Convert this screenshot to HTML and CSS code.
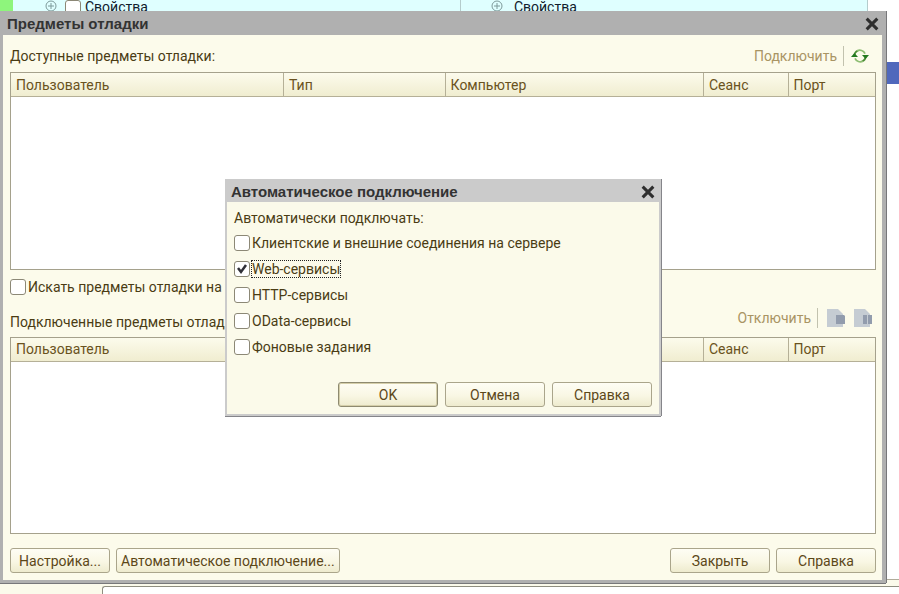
FILE: index.html
```html
<!DOCTYPE html>
<html lang="ru">
<head>
<meta charset="utf-8">
<title>Предметы отладки</title>
<link rel="stylesheet" href="styles.css">
</head>
<body>
<div class="workspace">
  <div class="tree-row">
    <div class="tree-cell tree-cell-main">
      <span class="marker"></span>
      <svg class="expand" viewBox="0 0 12 12"><circle cx="6" cy="6" r="5"/><path d="M3 6h6M6 3v6"/></svg>
      <input type="checkbox" class="check tree-check" aria-label="Свойства">
      <span>Свойства</span>
    </div>
    <div class="tree-cell tree-cell-second">
      <svg class="expand" viewBox="0 0 12 12"><circle cx="6" cy="6" r="5"/><path d="M3 6h6M6 3v6"/></svg>
      <span>Свойства</span>
    </div>
  </div>
  <div class="selection"></div>
  <div class="editor-foot"><div class="editor-field"></div></div>
</div>

<main class="window">
  <header class="titlebar">
    <h1>Предметы отладки</h1>
    <button class="close" aria-label="Закрыть окно"><svg viewBox="0 0 12 12"><path d="M2 2l8 8M10 2l-8 8"/></svg></button>
  </header>
  <div class="window-body">
    <div class="section-head">
      <h2>Доступные предметы отладки:</h2>
      <div class="tools tools-inset">
        <button class="link-button" disabled>Подключить</button>
        <span class="divider"></span>
        <button class="icon-button" aria-label="Обновить">
          <svg class="refresh" viewBox="0 0 18 16"><path class="arc" d="M3.4 8A5.6 5.6 0 0 1 7 2.6M14.6 8A5.6 5.6 0 0 1 11 13.4"/><path class="arc light" d="M6 3A5.6 5.6 0 0 1 14 5.6M12 13A5.6 5.6 0 0 1 4 10.4"/><path class="head" d="M0 9L3.4 5l3.6 4zM11 7h7L14.6 11z"/></svg>
        </button>
      </div>
    </div>
    <div class="grid">
      <table>
        <colgroup><col class="c-user"><col class="c-type"><col class="c-computer"><col class="c-session"><col class="c-port"></colgroup>
        <thead><tr><th>Пользователь</th><th>Тип</th><th>Компьютер</th><th>Сеанс</th><th>Порт</th></tr></thead>
      </table>
    </div>
    <label class="option search-option"><input type="checkbox" class="check"><span>Искать предметы отладки на у</span></label>
    <div class="section-head section-head-second">
      <h2>Подключенные предметы отладки:</h2>
      <div class="tools">
        <button class="link-button" disabled>Отключить</button>
        <span class="divider"></span>
        <button class="icon-button" disabled aria-label="Остановить">
          <svg class="doc" viewBox="0 0 18 18"><path class="page" d="M0 0h11l5 5v13H0z"/><path class="sign" d="M9 6h8l1 1v8H9z"/></svg>
        </button>
        <button class="icon-button" disabled aria-label="Приостановить">
          <svg class="doc" viewBox="0 0 18 18"><path class="page" d="M0 0h11l5 5v13H0z"/><path class="sign" d="M9 6h4v9H9zM14 6h4v9h-4z"/></svg>
        </button>
      </div>
    </div>
    <div class="grid">
      <table>
        <colgroup><col class="c-user"><col class="c-type"><col class="c-computer"><col class="c-session"><col class="c-port"></colgroup>
        <thead><tr><th>Пользователь</th><th>Тип</th><th>Компьютер</th><th>Сеанс</th><th>Порт</th></tr></thead>
      </table>
    </div>
    <footer class="actions">
      <button class="button">Настройка...</button>
      <button class="button">Автоматическое подключение...</button>
      <span class="spacer"></span>
      <button class="button">Закрыть</button>
      <button class="button">Справка</button>
    </footer>
  </div>

  <div class="dialog-layer">
    <section class="dialog" role="dialog" aria-labelledby="dialog-title">
      <header class="titlebar titlebar-light">
        <h1 id="dialog-title">Автоматическое подключение</h1>
        <button class="close" aria-label="Закрыть диалог"><svg viewBox="0 0 12 12"><path d="M2 2l8 8M10 2l-8 8"/></svg></button>
      </header>
      <fieldset class="options">
        <legend>Автоматически подключать:</legend>
        <label class="option"><input type="checkbox" class="check"><span>Клиентские и внешние соединения на сервере</span></label>
        <label class="option focused"><input type="checkbox" class="check" checked><span>Web-сервисы</span></label>
        <label class="option"><input type="checkbox" class="check"><span>HTTP-сервисы</span></label>
        <label class="option"><input type="checkbox" class="check"><span>OData-сервисы</span></label>
        <label class="option"><input type="checkbox" class="check"><span>Фоновые задания</span></label>
      </fieldset>
      <div class="dialog-actions">
        <button class="button button-default">OK</button>
        <button class="button">Отмена</button>
        <button class="button">Справка</button>
      </div>
    </section>
  </div>
</main>
</body>
</html>
```
FILE: styles.css
```css
* { box-sizing: border-box; }

body {
  margin: 0;
  height: 100vh;
  overflow: hidden;
  position: relative;
  background: #fff;
  color: #4a3c14;
  font: 14px/16px Roboto, "Liberation Sans", sans-serif;
}

button, input { font: inherit; color: inherit; }
h1, h2 { margin: 0; font-size: 14px; }
h2 { font-weight: 400; }

/* Workspace behind the windows */
.workspace {
  height: 100%;
  display: flex;
  flex-direction: column;
}
.tree-row {
  display: flex;
  height: 62px;
  margin-right: 31px;
  color: #10202c;
  line-height: 14px;
}
.tree-cell {
  display: flex;
  align-items: flex-start;
  height: 40px;
  background: #dfffff;
  border-right: 1px solid #b4cccc;
}
.tree-cell-main { width: 53.1%; }
.tree-cell-second { flex: 1; padding-left: 30px; gap: 11px; }
.marker { width: 13px; height: 11px; background: #8ef57c; margin-right: 32px; }
.expand {
  width: 12px;
  height: 12px;
  fill: none;
  stroke: #7d9a9a;
}
.tree-cell-main .expand { margin-right: 8px; }
.selection {
  align-self: flex-end;
  width: 12px;
  height: 22px;
  background: #5068bc;
}
.editor-foot {
  margin-top: auto;
  height: 15px;
  padding: 6px 0 0 102px;
  border-top: 1px solid #b0ac9a;
  background: #fbfaeb;
}
.editor-field {
  height: 100%;
  background: #fff;
  border: solid #8f8e80;
  border-width: 1px 0 0 1px;
  border-top-left-radius: 3px;
}

/* Windows */
.window {
  position: absolute;
  inset: 11px 13px 11px 0;
  display: flex;
  flex-direction: column;
  background: #fcfbeb;
  border: solid #b0b0b0;
  border-width: 0 3px 3px;
  box-shadow: inset -1px 0 #b0b0b0, 1px 0 #77777a, 0 1px #77777a;
}
.titlebar {
  display: flex;
  align-items: center;
  justify-content: space-between;
  height: 24px;
  flex: none;
  padding: 2px 2px 0 4px;
  background: #b0b0b0;
  color: #333;
}
.titlebar-light { height: 23px; background: #cbcbcb; }
.titlebar h1 { font: 700 15px/16px "Liberation Sans", sans-serif; }
.close {
  width: 18px;
  height: 18px;
  padding: 1px;
  border: 0;
  background: none;
}
.close svg { display: block; width: 16px; height: 16px; }
.close path { fill: none; stroke: #2e2e2e; stroke-width: 2.3; }

.window-body {
  flex: 1;
  display: flex;
  flex-direction: column;
  padding: 0 7px 7px;
}
.section-head {
  display: flex;
  align-items: center;
  justify-content: space-between;
  height: 37px;
  padding-top: 4px;
}
.section-head-second { padding-top: 8px; }
.section-head-second .tools { align-self: flex-start; }
.tools { display: flex; align-items: center; gap: 6px; padding-right: 4px; }
.tools-inset { padding-right: 7px; }
.tools-inset .icon-button { margin-left: 1px; }
.divider { width: 1px; height: 20px; background: #c2c2ae; }
.link-button {
  border: 0;
  padding: 0;
  background: none;
  color: #a99463;
}
.icon-button {
  display: flex;
  padding: 0;
  border: 0;
  background: none;
  margin-left: 3px;
}
.refresh { width: 18px; height: 16px; }
.refresh .arc { fill: none; stroke: #4a8b35; stroke-width: 1.8; }
.refresh .light { stroke: #8dbd72; }
.refresh .head { fill: #247a20; }
.doc { width: 18px; height: 18px; }
.doc .page { fill: #c5ccd3; }
.doc .sign { fill: #929cad; }

.grid {
  flex: 1;
  background: #fff;
  border: 1px solid #a5a18c;
}
.grid table {
  width: 100%;
  table-layout: fixed;
  border-collapse: separate;
  border-spacing: 0;
}
.grid th {
  height: 24px;
  padding: 0 5px;
  text-align: left;
  font-weight: 400;
  color: #6a5220;
  background: linear-gradient(#fcfbec, #f0edd0);
  border-right: 1px solid #b5b097;
  border-bottom: 1px solid #b5b097;
}
.grid th:last-child { border-right: 0; }
.c-user { width: 31.6%; }
.c-type { width: 18.7%; }
.c-computer { width: 29.9%; }
.c-session { width: 9.8%; }

.option {
  display: flex;
  align-items: center;
  gap: 2px;
  height: 26px;
}
.search-option { margin-top: 4px; }
.check {
  appearance: none;
  flex: none;
  width: 16px;
  height: 16px;
  margin: 0;
  background: #fff;
  border: 1px solid #8c8876;
  border-radius: 3px;
}
.tree-check { margin-right: 4px; }
.check:checked {
  background: #fff url("data:image/svg+xml,%3Csvg xmlns='http://www.w3.org/2000/svg' viewBox='0 0 14 14'%3E%3Cpath d='M3 6l3 4 5-7' fill='none' stroke='%23303038' stroke-width='2.5'/%3E%3C/svg%3E");
}
.focused span { outline: 1px dotted #222; }

.button {
  min-width: 100px;
  height: 25px;
  padding: 0 4px;
  border: 1px solid #aaa58b;
  border-radius: 3px;
  background: linear-gradient(#fefdf4, #f9f7e4 55%, #eeebce);
  color: #5c4718;
}
.button-default { box-shadow: inset 0 0 0 1px #d5cfaa; border-color: #8e8a70; }
.actions {
  display: flex;
  align-items: flex-end;
  gap: 6px;
  padding-top: 14px;
}
.spacer { flex: 1; }

.dialog-layer {
  position: absolute;
  inset: 0;
  display: flex;
  align-items: center;
  justify-content: center;
  padding-top: 4px;
}
.dialog {
  width: 436px;
  background: #fbfaea;
  border: solid #cbcbcb;
  border-width: 0 2px 2px;
  box-shadow: 1px 0 #85858a, 0 1px #85858a;
}
.options { margin: 0; padding: 0 7px; border: 0; }
.options legend { padding: 8px 0 4px; }
.dialog-actions {
  display: flex;
  justify-content: flex-end;
  gap: 7px;
  padding: 22px 7px 7px;
}
```
